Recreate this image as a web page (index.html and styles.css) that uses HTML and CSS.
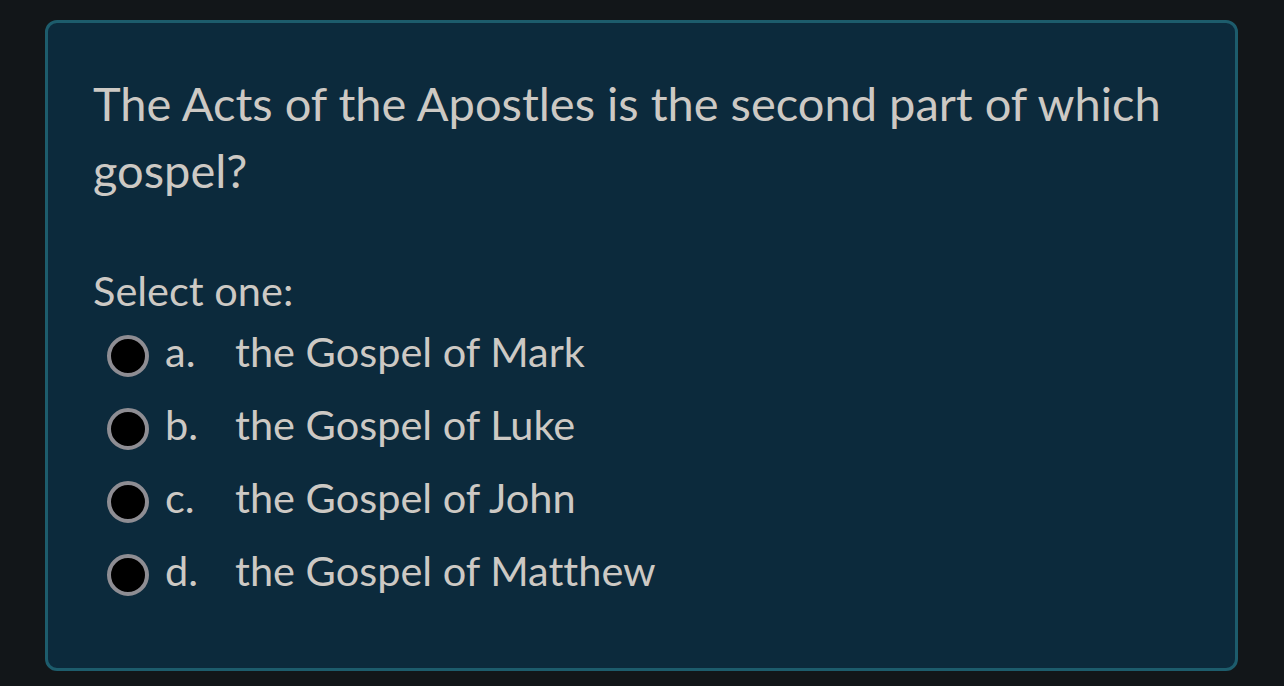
FILE: index.html
```html
<!DOCTYPE html>
<html>
<head>
<meta charset="utf-8">
<link rel="stylesheet" href="styles.css">
</head>
<body>
<div class="card">
  <div class="question">The Acts of the Apostles is the second part of which gospel?</div>
  <div class="prompt">Select one:</div>
  <div class="options">
    <div class="option"><span class="radio"></span><span class="letter">a.</span><span class="text">the Gospel of Mark</span></div>
    <div class="option"><span class="radio"></span><span class="letter">b.</span><span class="text">the Gospel of Luke</span></div>
    <div class="option"><span class="radio"></span><span class="letter">c.</span><span class="text">the Gospel of John</span></div>
    <div class="option"><span class="radio"></span><span class="letter">d.</span><span class="text">the Gospel of Matthew</span></div>
  </div>
</div>
</body>
</html>
```
FILE: styles.css
```css
html, body {
  margin: 0;
  padding: 0;
  background: #121619;
  height: 100%;
}
body {
  padding: 20px 46px 15px 45px;
  box-sizing: border-box;
  font-family: Lato, "Open Sans", sans-serif;
  font-variant-ligatures: none;
  color: #cdc9c4;
}
.card {
  box-sizing: border-box;
  height: 651px;
  background: #0c2a3c;
  border: 3px solid #1d5c6c;
  border-radius: 12px;
  padding: 47px 45px 0 45px;
}
.question {
  font-size: 47px;
  line-height: 67px;
  margin-bottom: 58px;
}
.prompt {
  font-size: 41.5px;
  line-height: 56px;
}
.options {
  display: flex;
  flex-direction: column;
  padding-left: 14px;
  margin-top: -4px;
}
.option {
  display: flex;
  align-items: center;
  height: 73px;
  font-size: 41.5px;
}
.radio {
  flex: none;
  width: 34px;
  height: 34px;
  border-radius: 50%;
  background: #000;
  border: 4px solid #8e8d93;
  margin-right: 16px;
  margin-top: 11px;
}
.letter {
  width: 70px;
}
```
